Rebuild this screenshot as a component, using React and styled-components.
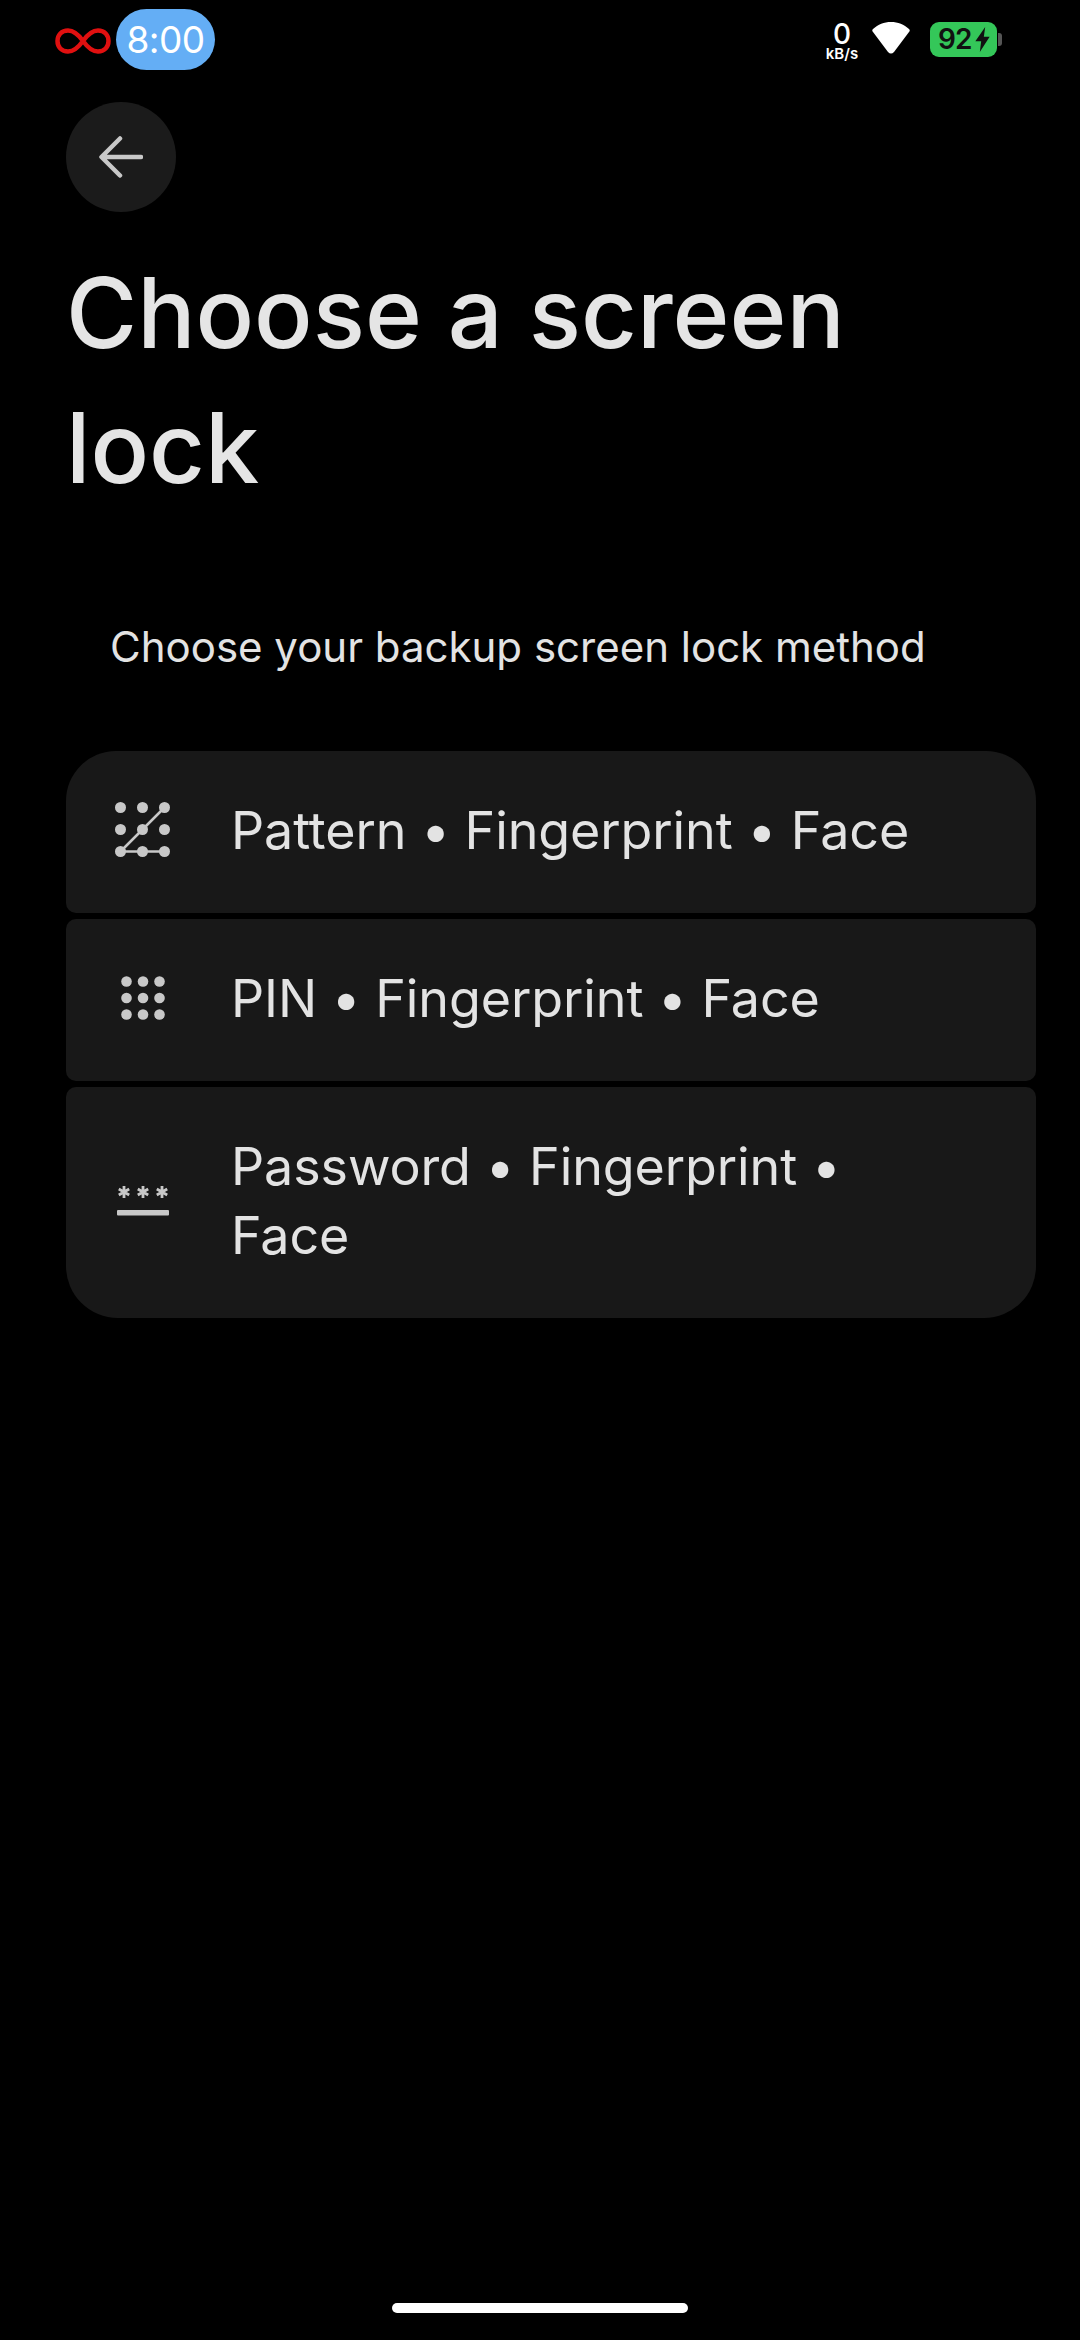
import React from 'react';
import styled, { createGlobalStyle } from 'styled-components';

const Global = createGlobalStyle`
  html, body { margin: 0; padding: 0; background: #000; }
`;

const Screen = styled.div`
  width: 1080px;
  height: 2340px;
  background: #000;
  display: flex;
  flex-direction: column;
  font-family: Inter, "Liberation Sans", sans-serif;
  overflow: hidden;
`;

const StatusBar = styled.div`
  height: 80px;
  padding: 9px 78px 0 55px;
  box-sizing: border-box;
  display: flex;
  align-items: flex-start;
`;

const Clock = styled.div`
  width: 99px;
  height: 61px;
  margin-left: 5px;
  border-radius: 31px;
  background: #64aef5;
  color: #fff;
  font-size: 37px;
  line-height: 61px;
  text-align: center;
  letter-spacing: -0.5px;
`;

const StatusRight = styled.div`
  margin-left: auto;
  display: flex;
  align-items: flex-start;
  padding-top: 13px;
`;

const Speed = styled.div`
  width: 40px;
  color: #fff;
  font-weight: 600;
  text-align: center;
  font-size: 15px;
  line-height: 15px;
  margin-right: 10px;
  span {
    display: block;
    font-size: 28px;
    line-height: 24px;
    font-weight: 500;
  }
`;

const Battery = styled.div`
  width: 67px;
  height: 35px;
  margin-left: 20px;
  border-radius: 9px;
  background: #34c759;
  color: #111;
  font-size: 28px;
  font-weight: 600;
  letter-spacing: -1px;
  line-height: 35px;
  display: flex;
  align-items: center;
  padding-left: 8px;
  box-sizing: border-box;
`;

const BatteryTip = styled.div`
  width: 4px;
  height: 13px;
  margin: 11px 0 0 1px;
  border-radius: 0 3px 3px 0;
  background: #555;
`;

const Main = styled.div`
  padding: 22px 44px 0 66px;
  display: flex;
  flex-direction: column;
`;

const BackButton = styled.button`
  width: 110px;
  height: 110px;
  border: 0;
  padding: 0;
  border-radius: 50%;
  background: #1b1b1b;
  display: flex;
  align-items: center;
  justify-content: center;
`;

const Title = styled.h1`
  margin: 33px 0 0;
  color: #e5e5e5;
  font-size: 97px;
  line-height: 135px;
  font-weight: 500;
  width: 860px;
`;

const Subtitle = styled.p`
  margin: 104px 0 0 44px;
  color: #e3e3e3;
  font-size: 42px;
  line-height: 56px;
  font-weight: 400;
`;

const List = styled.div`
  margin-top: 76px;
  display: flex;
  flex-direction: column;
  gap: 6px;
`;

const Row = styled.div`
  background: #181818;
  border-radius: ${(p) => p.$radius};
  display: flex;
  align-items: center;
  box-sizing: border-box;
  padding: 44.5px 110px 48.5px 0;
`;

const IconSlot = styled.div`
  width: 154px;
  margin-right: 11px;
  flex: none;
  display: flex;
  justify-content: center;
  svg { display: block; }
`;

const Label = styled.div`
  color: #e3e3e3;
  font-size: 52px;
  line-height: 69px;
  letter-spacing: -0.1px;
`;

const Spacer = styled.div`
  flex: 1;
`;

const HomeBar = styled.div`
  width: 296px;
  height: 10px;
  border-radius: 5px;
  background: #fff;
  margin: 0 auto 27px;
`;

const PatternIcon = () => (
  <svg width="56" height="56" viewBox="0 0 56 56" fill="#c8c8c8">
    {[5.5, 27.5, 49.5].flatMap((y) =>
      [5.5, 27.5, 49.5].map((x) => <circle key={`${x}-${y}`} cx={x} cy={y} r="5.5" />)
    )}
    <path d="M5.5 49.5L49.5 5.5M5.5 49.5H49.5" stroke="#c8c8c8" strokeWidth="2.5" fill="none" />
  </svg>
);

const PinIcon = () => (
  <svg width="44" height="44" viewBox="0 0 44 44" fill="#c8c8c8">
    {[5.5, 22, 38.5].flatMap((y) =>
      [5.5, 22, 38.5].map((x) => <circle key={`${x}-${y}`} cx={x} cy={y} r="5.3" />)
    )}
  </svg>
);

const Star = ({ x }) => (
  <path
    d={`M${x} 0V12M${x - 5.2} 3L${x + 5.2} 9M${x + 5.2} 3L${x - 5.2} 9`}
    stroke="#c8c8c8"
    strokeWidth="2.8"
    fill="none"
  />
);

const PasswordIcon = () => (
  <svg width="52" height="30" viewBox="0 0 52 30">
    <Star x={7} />
    <Star x={26} />
    <Star x={45} />
    <rect x="0" y="24" width="52" height="5.5" rx="1" fill="#c8c8c8" />
  </svg>
);

const options = [
  { label: 'Pattern • Fingerprint • Face', Icon: PatternIcon, radius: '50px 50px 10px 10px' },
  { label: 'PIN • Fingerprint • Face', Icon: PinIcon, radius: '10px' },
  { label: 'Password • Fingerprint • Face', Icon: PasswordIcon, radius: '10px 10px 52px 52px' },
];

const App = () => {
  return (
    <>
      <Global />
      <Screen>
        <StatusBar>
          <svg width="56" height="26" viewBox="0 0 56 26" style={{ marginTop: 19 }}>
            <path
              d="M28 13C23 6 19 2.5 13 2.5C6.5 2.5 2.5 7 2.5 13S6.5 23.5 13 23.5C19 23.5 23 20 28 13C33 6 37 2.5 43 2.5C49.5 2.5 53.5 7 53.5 13S49.5 23.5 43 23.5C37 23.5 33 20 28 13Z"
              fill="none"
              stroke="#e01010"
              strokeWidth="4.5"
            />
          </svg>
          <Clock>8:00</Clock>
          <StatusRight>
            <Speed>
              <span>0</span>
              kB/s
            </Speed>
            <svg width="38" height="32" viewBox="0 0 38 32">
              <path
                d="M19 0C26 0 32 2.5 37 7C38 8 38 9 37 10L22 30C20 32 18 32 16 30L1 10C0 9 0 8 1 7C6 2.5 12 0 19 0Z"
                fill="#fff"
              />
            </svg>
            <Battery>
              92
              <svg width="15" height="25" viewBox="0 0 16 28" style={{ marginLeft: 4 }}>
                <path d="M11 0L0 16H6.5L5 28L16 11H9.5Z" fill="#111" />
              </svg>
            </Battery>
            <BatteryTip />
          </StatusRight>
        </StatusBar>
        <Main>
          <BackButton aria-label="Back">
            <svg width="44" height="44" viewBox="0 0 44 44" fill="none">
              <path
                d="M42 22H3M21 3.5L2.5 22L21 40.5"
                stroke="#c8c8c8"
                strokeWidth="4.5"
                strokeLinecap="round"
                strokeLinejoin="round"
              />
            </svg>
          </BackButton>
          <Title>Choose a screen lock</Title>
          <Subtitle>Choose your backup screen lock method</Subtitle>
          <List>
            {options.map(({ label, Icon, radius }) => (
              <Row key={label} $radius={radius}>
                <IconSlot>
                  <Icon />
                </IconSlot>
                <Label>{label}</Label>
              </Row>
            ))}
          </List>
        </Main>
        <Spacer />
        <HomeBar />
      </Screen>
    </>
  );
};

export default App;
